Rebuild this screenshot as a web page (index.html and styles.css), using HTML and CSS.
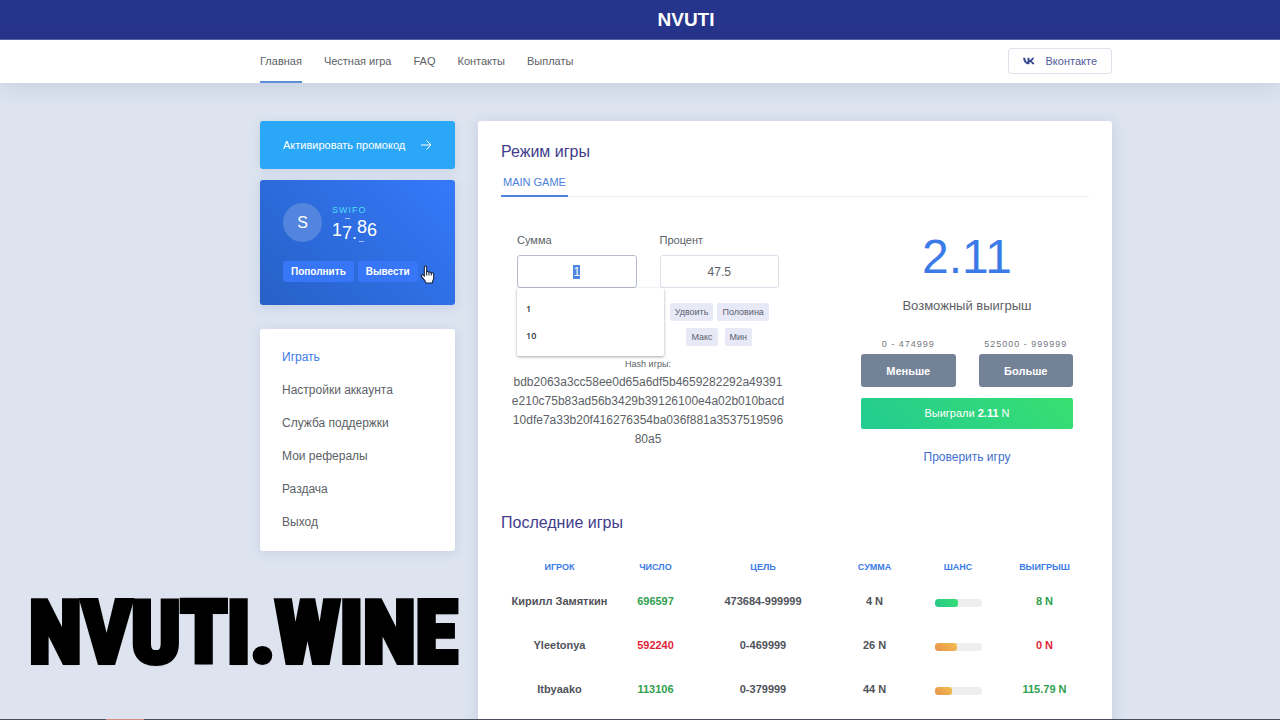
FILE: index.html
```html
<!DOCTYPE html>
<html lang="ru">
<head>
<meta charset="utf-8">
<title>NVUTI</title>
<link rel="stylesheet" href="styles.css">
</head>
<body>
<div class="page">
  <header class="topbar"><h1 class="logo">NVUTI</h1></header>

  <div class="navbar">
    <nav class="nav">
      <a class="nav-link active" href="#">Главная</a>
      <a class="nav-link" href="#">Честная игра</a>
      <a class="nav-link" href="#">FAQ</a>
      <a class="nav-link" href="#">Контакты</a>
      <a class="nav-link" href="#">Выплаты</a>
    </nav>
    <a class="vk" href="#">
      <svg class="vk-icon" viewBox="0 0 24 14" aria-hidden="true"><path d="M13 13.6C4.900 13.600 0.600 8.500 0.300 0.400H4.400C4.600 6 7 8.500 9 9V0.400H12.900V5.200C15.100 4.900 17.500 2.600 18.300 0.400H22.200C21.500 3.600 18.900 6 17.100 7C18.900 7.900 21.900 10 23.100 13.600H18.800C17.900 11 15.700 9.100 12.900 8.800V13.600Z"/></svg>
      <span>Вконтакте</span>
    </a>
  </div>

  <div class="layout">
    <aside class="sidebar">
      <button class="promo" type="button">
        <span>Активировать промокод</span>
        <svg class="arrow" viewBox="0 0 12 12" aria-hidden="true"><path d="M1 6H11M6.500 1.500L11 6L6.500 10.500"/></svg>
      </button>

      <section class="balance">
        <div class="user">
          <div class="avatar">S</div>
          <div class="user-info">
            <div class="user-name">SWIFO</div>
            <div class="odometer"><span>1</span><span class="low">7</span><span class="low">.</span><span class="high">8</span><span>6</span></div>
          </div>
        </div>
        <div class="wallet">
          <button class="wallet-btn" type="button">Пополнить</button>
          <button class="wallet-btn" type="button">Вывести</button>
        </div>
        <svg class="cursor" viewBox="0 0 14 18" aria-hidden="true"><path d="M4 10.500V2.200C4 .6 6.200 .6 6.200 2.200V6.500C7 5.800 8.200 6.100 8.400 7C9.200 6.400 10.400 6.800 10.600 7.600C11.600 7.100 12.900 7.700 12.900 9V12C12.900 14.200 11.500 15.200 11.500 17H5.500C5.300 15 3 13.200 1.500 11C.5 9.600 2 8.500 3 9.500Z"/><path class="fingers" d="M6.200 6.500V10M8.400 7V10M10.600 7.600V10"/></svg>
      </section>

      <nav class="menu">
        <a class="menu-link active" href="#">Играть</a>
        <a class="menu-link" href="#">Настройки аккаунта</a>
        <a class="menu-link" href="#">Служба поддержки</a>
        <a class="menu-link" href="#">Мои рефералы</a>
        <a class="menu-link" href="#">Раздача</a>
        <a class="menu-link" href="#">Выход</a>
      </nav>
    </aside>

    <main class="card">
      <h2 class="title">Режим игры</h2>
      <div class="tabs"><a class="tab" href="#">MAIN GAME</a></div>

      <div class="game">
        <section class="bet">
          <div class="fields">
            <div class="field">
              <label for="sum">Сумма</label>
              <div class="input-wrap">
                <input class="input focused" id="sum" type="text" value="1" autocomplete="off">
                <ul class="suggest"><li>1</li><li>10</li></ul>
              </div>
            </div>
            <div class="field">
              <label for="percent">Процент</label>
              <input class="input" id="percent" type="text" value="47.5">
              <div class="chips">
                <button class="chip" type="button">Удвоить</button>
                <button class="chip" type="button">Половина</button>
              </div>
              <div class="chips spaced">
                <button class="chip" type="button">Макс</button>
                <button class="chip" type="button">Мин</button>
              </div>
            </div>
          </div>
          <div class="hash-label">Hash игры:</div>
          <div class="hash">bdb2063a3cc58ee0d65a6df5b4659282292a49391<br>e210c75b83ad56b3429b39126100e4a02b010bacd<br>10dfe7a33b20f416276354ba036f881a3537519596<br>80a5</div>
        </section>

        <section class="result">
          <div class="win">2.11</div>
          <div class="win-label">Возможный выигрыш</div>
          <div class="choices">
            <div class="choice"><span class="range">0 - 474999</span><button class="choice-btn" type="button">Меньше</button></div>
            <div class="choice"><span class="range">525000 - 999999</span><button class="choice-btn" type="button">Больше</button></div>
          </div>
          <div class="success">Выиграли <b>2.11</b> N</div>
          <a class="check" href="#">Проверить игру</a>
        </section>
      </div>

      <h2 class="title">Последние игры</h2>
      <table class="games">
        <colgroup><col class="c-player"><col class="c-number"><col class="c-goal"><col class="c-sum"><col class="c-chance"><col class="c-win"></colgroup>
        <thead><tr><th>ИГРОК</th><th>ЧИСЛО</th><th>ЦЕЛЬ</th><th>СУММА</th><th>ШАНС</th><th>ВЫИГРЫШ</th></tr></thead>
        <tbody>
          <tr><td>Кирилл Замяткин</td><td class="green">696597</td><td>473684-999999</td><td>4 N</td><td><div class="bar"><div class="fill" style="width:51%"></div></div></td><td class="green">8 N</td></tr>
          <tr><td>Yleetonya</td><td class="red">592240</td><td>0-469999</td><td>26 N</td><td><div class="bar"><div class="fill warm" style="width:47%"></div></div></td><td class="red">0 N</td></tr>
          <tr><td>Itbyaako</td><td class="green">113106</td><td>0-379999</td><td>44 N</td><td><div class="bar"><div class="fill warm" style="width:38%"></div></div></td><td class="green">115.79 N</td></tr>
        </tbody>
      </table>
    </main>
  </div>

  <div class="watermark">NVUTI.WINE</div>
  <div class="taskbar"></div>
</div>
<script src="script.js"></script>
</body>
</html>
```
FILE: script.js
```js
const sum = document.getElementById("sum");
sum.focus();
sum.select();
```
FILE: styles.css
```css
* { box-sizing: border-box; }
body { margin: 0; font-family: "Liberation Sans", Arial, sans-serif; font-size: 12px; color: #5c5f66; background: #dde4f0; }
a { color: inherit; text-decoration: none; }
button { font: inherit; border: 0; padding: 0; color: #fff; cursor: pointer; }
h1, h2, ul { margin: 0; padding: 0; }

.page { position: relative; height: 100vh; overflow: hidden; }
.topbar, .navbar, .layout { padding: 0 168px 0 260px; }
.topbar { height: 40px; display: flex; align-items: center; justify-content: center; background: #27348b; border-bottom: 1px solid #5a62a8; }
.logo { font-size: 19px; line-height: 24px; color: #fff; }

.navbar { height: 43px; display: flex; align-items: center; justify-content: space-between; background: #fff; box-shadow: 0 4px 22px rgba(40, 50, 90, .12); }
.nav { display: flex; gap: 22px; align-self: stretch; font-size: 11px; }
.nav-link { display: flex; align-items: center; border-bottom: 2px solid transparent; }
.nav-link.active { border-bottom-color: #5b8fd8; }
.vk { display: flex; align-items: center; gap: 11px; height: 26px; margin-bottom: 1px; padding: 0 14px; font-size: 11px; color: #515c9c; border: 1px solid #dfe2ec; border-radius: 3px; }
.vk-icon { width: 12px; height: 8px; fill: #35478f; }

.layout { display: grid; grid-template-columns: 195px 1fr; gap: 23px; align-items: start; padding-top: 38px; }
.sidebar { display: flex; flex-direction: column; }
.promo { display: flex; align-items: center; justify-content: space-between; height: 48px; padding: 0 23px; font-size: 11px; background: #2ba7f8; border-radius: 3px; box-shadow: 0 2px 10px rgba(40, 80, 160, .12); }
.arrow { width: 12px; height: 12px; fill: none; stroke: #fff; }

.balance { position: relative; margin-top: 11px; padding: 23px; height: 125px; border-radius: 3px; background: linear-gradient(45deg, #2761c6, #3579fb); box-shadow: 0 2px 12px rgba(40, 80, 160, .15); }
.user { display: flex; align-items: center; gap: 10px; height: 39px; }
.avatar { width: 39px; height: 39px; border-radius: 50%; display: flex; align-items: center; justify-content: center; font-size: 16px; color: #fff; background: #5384de; }
.user-name { font-size: 9px; line-height: 14px; letter-spacing: 1px; color: #4fdcf8; }
.odometer { position: relative; display: flex; align-items: center; height: 26px; font-size: 18px; line-height: 20px; color: #fff; }
.odometer .low { align-self: flex-end; }
.odometer .high { align-self: flex-start; }
.odometer::before, .odometer::after { content: ""; position: absolute; width: 5px; height: 1px; background: #a9c5fb; }
.odometer::before { left: 13px; top: 1px; }
.odometer::after { left: 27px; bottom: 1px; }
.wallet { display: flex; gap: 4px; margin-top: 19px; }
.wallet-btn { height: 21px; padding: 0 8px; font-size: 10px; font-weight: bold; background: #3777f7; border-radius: 3px; }
.cursor { position: absolute; left: 160px; top: 85px; width: 15px; height: 19px; fill: #fff; stroke: #15213c; }
.cursor .fingers { fill: none; }

.menu { display: flex; flex-direction: column; margin-top: 24px; padding: 12px 22px; background: #fff; border-radius: 3px; box-shadow: 0 2px 12px rgba(40, 60, 120, .12); }
.menu-link { line-height: 33px; }
.menu-link.active { color: #3b7be8; }

.card { padding: 22px 23px; height: 640px; background: #fff; border-radius: 3px; box-shadow: 0 2px 14px rgba(40, 60, 120, .14); }
.title { font-size: 16px; line-height: 18px; font-weight: normal; color: #413c8c; }
.tabs { display: flex; margin-top: 11px; border-bottom: 1px solid #eceef3; }
.tab { margin-bottom: -1px; padding: 0 2px; font-size: 11px; line-height: 20px; height: 25px; color: #4a82dc; border-bottom: 2px solid #4a82dc; }

.game { display: grid; grid-template-columns: 1fr 1fr; height: 317px; padding-top: 35px; }
.bet { padding: 0 16px; }
.fields { display: grid; grid-template-columns: 1fr 1fr; gap: 23px; }
.field label { display: block; font-size: 11px; line-height: 16px; margin-bottom: 7px; }
.input-wrap { position: relative; }
.input { display: block; width: 100%; height: 33px; padding: 0; text-align: center; font: 12px "Liberation Sans", Arial, sans-serif; color: #5c5f66; background: #fff; border: 1px solid #dcdfea; border-radius: 3px; outline: 0; }
.input.focused { border-color: #b4bccd; }
.input::selection { background: #4b86e0; color: #fff; }
.suggest { position: absolute; left: 0; top: 33px; width: 147px; padding: 7px 9px; list-style: none; background: #fff; border-radius: 2px; box-shadow: 0 1px 3px rgba(0, 0, 0, .35); font: 600 9px/27px "Open Sans", sans-serif; color: #33353b; }
.chips { display: flex; justify-content: center; gap: 4px; margin-top: 15px; }
.chips.spaced { gap: 7px; margin-top: 7px; }
.chip { height: 18px; padding: 0 5px; font-size: 9px; white-space: nowrap; color: #5c6070; background: #e7eaf6; border-radius: 2px; }
.hash-label { margin-top: 11px; text-align: center; font-size: 9px; line-height: 14px; }
.hash { text-align: center; line-height: 19px; margin: 2px -8px 0; white-space: nowrap; }

.result { padding: 0 16px 0 66px; text-align: center; }
.win { font-size: 48px; line-height: 56px; margin-top: -3px; color: #3b7be8; }
.win-label { font-size: 13px; line-height: 18px; margin-top: 12px; }
.choices { display: grid; grid-template-columns: 1fr 1fr; gap: 23px; margin-top: 22px; }
.choice { display: flex; flex-direction: column; align-items: center; }
.range { padding-bottom: 3px; font-size: 9px; line-height: 14px; letter-spacing: 1px; white-space: nowrap; color: #74777f; }
.choice-btn { width: 100%; height: 33px; font-size: 11px; font-weight: bold; background: #748297; border-radius: 3px; }
.success { margin-top: 11px; line-height: 31px; font-size: 11px; color: #fff; background: linear-gradient(45deg, #23cb91, #38df70); border-radius: 2px; }
.check { display: block; margin-top: 19px; line-height: 18px; color: #416fce; }

.games { width: 100%; margin-top: 23px; border-collapse: collapse; table-layout: fixed; text-align: center; }
.c-player { width: 117px; }
.c-number { width: 75px; }
.c-goal { width: 140px; }
.c-sum { width: 83px; }
.c-chance { width: 84px; }
.c-win { width: 89px; }
.games th { height: 24px; padding: 0; font-size: 9px; color: #3b7be8; }
.games td { height: 44px; padding: 0; font-size: 11px; font-weight: bold; white-space: nowrap; color: #505259; }
.games td.green { color: #2fa04e; }
.games td.red { color: #df1f3a; }
.bar { width: 47px; height: 8px; margin: 4px auto 0; overflow: hidden; background: #eee; border-radius: 3px; }
.fill { height: 100%; border-radius: 3px; background: linear-gradient(45deg, #23c78a, #38df70); }
.fill.warm { background: linear-gradient(45deg, #ea924c, #f0c050); }

.watermark { position: absolute; left: 29px; bottom: 37px; font: bold 86px/100px "Roboto Condensed", "Open Sans Condensed", "Liberation Sans", sans-serif; color: #000; -webkit-text-stroke: 6px #000; text-shadow: 0 2px 3px rgba(0, 0, 0, .35); }
.taskbar { position: absolute; left: 0; right: 0; bottom: 0; height: 1px; background: linear-gradient(90deg, #4a4d5e 106px, #d98a80 106px 144px, #4a4d5e 144px); }
```
